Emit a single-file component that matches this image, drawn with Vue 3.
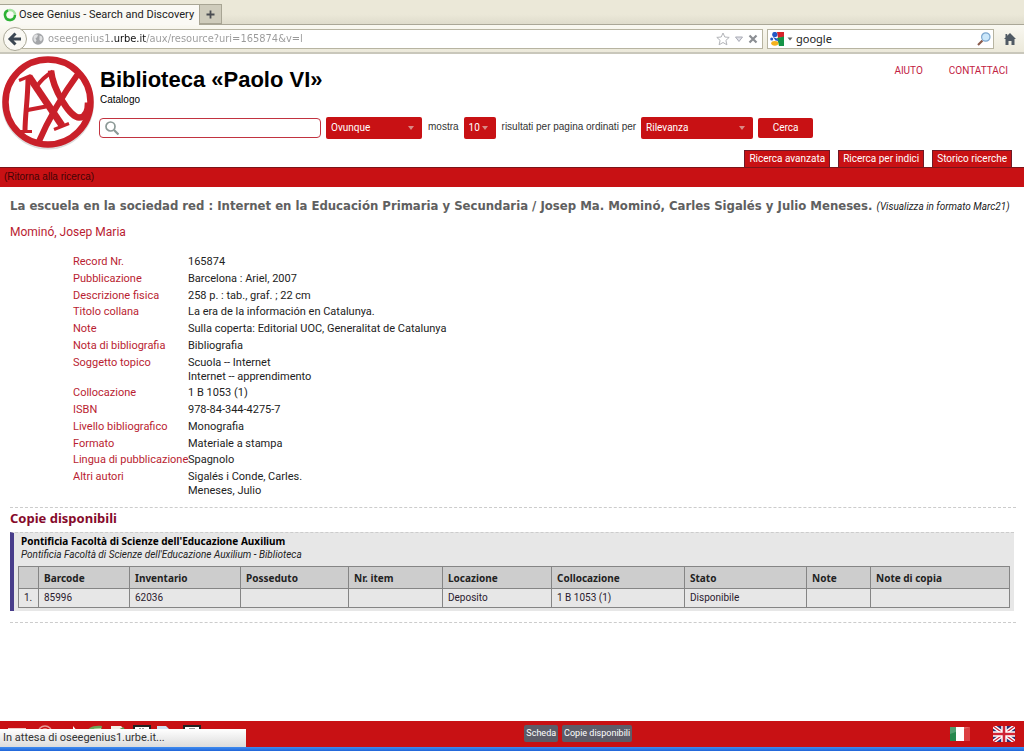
<script setup>
import { ref } from 'vue'

const address = ref('oseegenius1.urbe.it/aux/resource?uri=165874&v=l')
const webSearch = ref('google')
const query = ref('')

const details = [
  { label: 'Record Nr.', values: ['165874'] },
  { label: 'Pubblicazione', values: ['Barcelona : Ariel, 2007'] },
  { label: 'Descrizione fisica', values: ['258 p. : tab., graf. ; 22 cm'] },
  { label: 'Titolo collana', values: ['La era de la información en Catalunya.'] },
  { label: 'Note', values: ['Sulla coperta: Editorial UOC, Generalitat de Catalunya'] },
  { label: 'Nota di bibliografia', values: ['Bibliografia'] },
  { label: 'Soggetto topico', values: ['Scuola -- Internet', 'Internet -- apprendimento'] },
  { label: 'Collocazione', values: ['1 B 1053 (1)'] },
  { label: 'ISBN', values: ['978-84-344-4275-7'] },
  { label: 'Livello bibliografico', values: ['Monografia'] },
  { label: 'Formato', values: ['Materiale a stampa'] },
  { label: 'Lingua di pubblicazione', values: ['Spagnolo'] },
  { label: 'Altri autori', values: ['Sigalés i Conde, Carles.', 'Meneses, Julio'] },
]

const columns = ['', 'Barcode', 'Inventario', 'Posseduto', 'Nr. item', 'Locazione', 'Collocazione', 'Stato', 'Note', 'Note di copia']
const copies = [['1.', '85996', '62036', '', '', 'Deposito', '1 B 1053 (1)', 'Disponibile', '', '']]
</script>

<template>
  <div class="window">
    <div class="tabstrip">
      <div class="tab">
        <svg class="spinner" viewBox="0 0 14 14"><circle cx="7" cy="7" r="5" fill="none" stroke="#a5e3a0" stroke-width="2.4"/><path d="M5 2.4A5 5 0 1 0 12 7" fill="none" stroke="#2eb135" stroke-width="2.4"/></svg>
        <span>Osee Genius - Search and Discovery</span>
      </div>
      <button class="newtab" aria-label="Nuova scheda"><svg viewBox="0 0 9 9"><path d="M4.5 0.5v8M0.5 4.5h8" stroke="#4a4d52" stroke-width="1.8"/></svg></button>
    </div>
    <div class="navbar">
      <button class="back" aria-label="Indietro">
        <svg viewBox="0 0 24 24"><circle cx="12" cy="12" r="11.5" fill="#faf9f4" stroke="#a9a796"/><path d="M12.5 6.5 7 12l5.500 5.500M7.500 12H18" fill="none" stroke="#3c4753" stroke-width="3"/></svg>
      </button>
      <div class="addressbar">
        <svg class="i12" viewBox="0 0 12 12"><circle cx="6" cy="6" r="5.700" fill="#a3a5a8"/><path d="M1.500 3 4 1.200 6 2 5 4.500 3.500 5 4.500 7.500 3.200 9.500 1.500 7zM7.500 2.500 10 3.500 10.500 6 9 8.500 7.500 7z" fill="#dfe0e1"/></svg>
        <input v-model="address" class="url" aria-label="Indirizzo">
        <svg class="i14" viewBox="0 0 14 14"><path d="m7 1 1.800 4 4.400.4-3.300 3 1 4.400L7 10.500l-3.900 2.300 1-4.400-3.300-3 4.400-.4z" fill="#fff" stroke="#b2b4b8"/></svg>
        <svg class="i10" viewBox="0 0 10 10"><path d="M1.500 3h7L5 7.500z" fill="#e0e1e8" stroke="#a9abb5"/></svg>
        <svg class="i10" viewBox="0 0 10 10"><path d="m1.500 1.500 7 7m0-7-7 7" stroke="#8b8e93" stroke-width="2.200"/></svg>
      </div>
      <div class="searchbar">
        <svg class="i14" viewBox="0 0 14 14"><path d="M7 0h7v5L8 6z" fill="#d8232a"/><path d="M7 6 14 4.500V14H9z" fill="#159447"/><path d="M0 0h7v14H0z" fill="#fff"/><circle cx="4.800" cy="2.500" r="2.600" fill="#2458c5"/><circle cx="1.700" cy="7" r="1.500" fill="#2458c5"/><path d="m3 5 4 1.500L9 9 5.500 8.500z" fill="#2458c5"/><ellipse cx="4.800" cy="11.300" rx="3.600" ry="2.400" fill="#f5b21c"/></svg>
        <svg class="caret" viewBox="0 0 6 4"><path d="M0.500 0.500h5L3 3.500z" fill="#666"/></svg>
        <input v-model="webSearch" class="web" aria-label="Ricerca web">
        <svg class="i14" viewBox="0 0 14 14"><path d="M5.500 8.500 1 13" stroke="#8a5b4c" stroke-width="2.200"/><circle cx="8.800" cy="5" r="4.200" fill="#cbe7fa" stroke="#7ca6ce" stroke-width="1.200"/></svg>
      </div>
      <button class="home" aria-label="Pagina iniziale"><svg class="i12" viewBox="0 0 12 12"><path d="M6 0 12 6H10.500V12H7.500V8H4.500V12H1.500V6H0L1.500 4.500V1H3.200V2.800z" fill="#505a64"/></svg></button>
    </div>

    <header>
      <svg class="logo" viewBox="0 0 92 92">
        <circle cx="46" cy="47" r="42.500" fill="none" stroke="#ddd" stroke-width="7"/>
        <circle cx="46" cy="45.500" r="42.500" fill="#fff" stroke="#c9202a" stroke-width="6.500"/>
        <g fill="none" stroke="#c9202a">
          <path d="M17 24 29 19" stroke-width="3"/>
          <path d="M26 21C26 42 23 58 23 75" stroke-width="5"/>
          <path d="M15 75 30 75" stroke-width="3"/>
          <path d="M27 20 60 69" stroke-width="7"/>
          <path d="M23 54 44 50" stroke-width="4"/>
          <path d="M34 31C38 25 42 20 51 15" stroke-width="4"/>
          <path d="M49 14C51 33 68 61 77 61C83 61 86 55 86 46" stroke-width="6.500"/>
          <path d="M77 16C66 31 48 59 36 87" stroke-width="6"/>
          <path d="M52 73 67 67" stroke-width="3"/>
        </g>
      </svg>
      <div class="head">
        <div class="headtop">
          <div class="brand"><h1>Biblioteca «Paolo VI»</h1><p>Catalogo</p></div>
          <nav class="links"><a href="#">AIUTO</a><a href="#">CONTATTACI</a></nav>
        </div>
        <form class="find" @submit.prevent>
          <div class="query">
            <svg class="i14" viewBox="0 0 14 14"><circle cx="5.500" cy="5.500" r="4.500" fill="none" stroke="#8b9996" stroke-width="1.700"/><path d="m9 9 4.500 4.500" stroke="#8b9996" stroke-width="2.200"/></svg>
            <input v-model="query" aria-label="Testo da cercare">
          </div>
          <div class="pick where"><select aria-label="Campo di ricerca"><option>Ovunque</option></select><svg class="caret" viewBox="0 0 6 4"><path d="M0 0h6L3 4z" fill="#d98a86"/></svg></div>
          <label for="rows">mostra</label>
          <div class="pick count"><select id="rows"><option>10</option></select><svg class="caret" viewBox="0 0 6 4"><path d="M0 0h6L3 4z" fill="#d98a86"/></svg></div>
          <label for="order">risultati per pagina ordinati per</label>
          <div class="pick order"><select id="order"><option>Rilevanza</option></select><svg class="caret" viewBox="0 0 6 4"><path d="M0 0h6L3 4z" fill="#d98a86"/></svg></div>
          <button class="go">Cerca</button>
        </form>
        <nav class="modes"><a href="#">Ricerca avanzata</a><a href="#">Ricerca per indici</a><a href="#">Storico ricerche</a></nav>
      </div>
    </header>
    <div class="crumbs"><a href="#">(Ritorna alla ricerca)</a></div>

    <main>
      <div class="title"><h2>La escuela en la sociedad red : Internet en la Educación Primaria y Secundaria / Josep Ma. Mominó, Carles Sigalés y Julio Meneses.</h2><a href="#">(Visualizza in formato Marc21)</a></div>
      <a class="author" href="#">Mominó, Josep Maria</a>
      <dl>
        <template v-for="d in details" :key="d.label">
          <dt>{{ d.label }}</dt>
          <dd><div v-for="v in d.values" :key="v">{{ v }}</div></dd>
        </template>
      </dl>
      <section>
        <h3>Copie disponibili</h3>
        <div class="library">
          <h4>Pontificia Facoltà di Scienze dell'Educazione Auxilium</h4>
          <p>Pontificia Facoltà di Scienze dell'Educazione Auxilium - Biblioteca</p>
          <table>
            <colgroup><col v-for="(c, i) in columns" :key="i" :class="'c' + i"></colgroup>
            <thead><tr><th v-for="(c, i) in columns" :key="i" scope="col">{{ c }}</th></tr></thead>
            <tbody><tr v-for="row in copies" :key="row[1]"><td v-for="(c, i) in row" :key="i">{{ c }}</td></tr></tbody>
          </table>
        </div>
      </section>
    </main>

    <footer>
      <svg class="tools" viewBox="0 0 204 22">
        <path d="M8 7h18v10H8z" fill="#f3c9c4"/><path d="M38 12a7 7 0 0 1 14 0M41 12a4 4 0 0 1 8 0" fill="none" stroke="#e99a96" stroke-width="1.500"/>
        <path d="m73 5 5 6v6h-5z" fill="#fff"/><path d="M86 14c1-7 6-10 16-9l-2 12H86z" fill="#6aa55a"/><path d="M90 12c3-4 6-4 11-4" stroke="#b9d8a4" stroke-width="2"/>
        <path d="M111 5h10l4 4v10h-14z" fill="#f1efe6"/><path d="m118 10 6-3" stroke="#5b9b4d" stroke-width="2"/>
        <path d="M134 5h16v14h-16z" fill="#fff" stroke="#222" stroke-width="2"/><path d="M140 7v2m3-2v2" stroke="#333"/>
        <path d="M157 5h9l4 4v10h-13z" fill="#cfe0f2"/>
        <path d="M184 5h16v14h-16z" fill="#fff" stroke="#222" stroke-width="2"/><path d="M189 8h2m1-1v2m2-2v2" stroke="#333"/>
      </svg>
      <div class="jump"><button>Scheda</button><button>Copie disponibili</button></div>
      <div class="flags">
        <button aria-label="Italiano"><svg viewBox="0 0 22 16"><path d="M1 1h6v14H1z" fill="#26884e"/><path d="M7 1h8v14H7z" fill="#fff"/><path d="M15 1h6v14h-6z" fill="#dc3e42"/><path d="M1 1h20L1 8z" fill="#fff" opacity=".2"/></svg></button>
        <button aria-label="English"><svg viewBox="0 0 22 16"><path d="M0 0h22v16H0z" fill="#2b2f72"/><path d="M0 0 22 16M22 0 0 16" stroke="#fff" stroke-width="4"/><path d="M0 0 22 16M22 0 0 16" stroke="#cf2436" stroke-width="1.300"/><path d="M11 0v16M0 8h22" stroke="#fff" stroke-width="5.500"/><path d="M11 0v16M0 8h22" stroke="#cf2436" stroke-width="2.600"/></svg></button>
      </div>
      <div class="status">In attesa di oseegenius1.urbe.it...</div>
    </footer>
    <div class="taskbar"></div>
  </div>
</template>

<style>
body { margin: 0; background: #fff; }
</style>

<style scoped>
* { box-sizing: border-box; }
.window { min-height: 100vh; display: flex; flex-direction: column; font: 11px/14px Roboto, "Noto Sans", sans-serif; color: #222; }
h1, h2, h3, h4, p, dl, dd { margin: 0; }
a { text-decoration: none; }
button, input, select { font: inherit; border: 0; padding: 0; margin: 0; background: none; outline: 0; }
svg { display: block; flex: none; }
.i10 { width: 10px; height: 10px; }
.i12 { width: 12px; height: 12px; }
.i14 { width: 14px; height: 14px; }
.caret { width: 6px; height: 4px; }

.tabstrip { display: flex; align-items: flex-end; height: 25px; background: linear-gradient(#ebe8d8 60%, #dfdccc); border-bottom: 1px solid #aaa797; }
.tab { display: flex; align-items: center; gap: 2px; width: 200px; height: 21px; padding-left: 3px; margin-bottom: -1px; background: #faf9f4; border: 1px solid #a8a594; border-left: 0; border-bottom: 0; white-space: nowrap; color: #222; }
.spinner { width: 14px; height: 14px; }
.newtab { width: 22px; height: 20px; display: grid; place-items: center; background: #cfccbc; border: 1px solid #a8a594; border-left: 0; }
.newtab svg { width: 9px; height: 9px; }
.navbar { display: flex; align-items: center; height: 29px; padding: 0 8px 0 3px; background: linear-gradient(#f9f8f1, #ece9da); border-bottom: 2px solid #c9c7bb; }
.back { z-index: 1; width: 24px; height: 24px; }
.back svg { width: 24px; height: 24px; }
.addressbar, .searchbar { display: flex; align-items: center; height: 20px; background: #fff; border: 1px solid #b7b4a1; }
.addressbar { flex: 1; gap: 4px; margin-left: -8px; padding: 0 4px 0 12px; }
.url { flex: 1; min-width: 0; font-family: "DejaVu Sans Condensed", "DejaVu Sans", sans-serif; color: transparent; background: linear-gradient(90deg, #999 63px, #111 63px 98px, #999 98px); background-clip: text; -webkit-background-clip: text; }
.searchbar { width: 227px; gap: 3px; margin-left: 4px; padding: 0 2px; }
.web { flex: 1; min-width: 0; color: #222; font-family: "Noto Sans", sans-serif; }
.home { margin-left: 10px; }

header { display: flex; padding-left: 2px; height: 113px; }
.logo { width: 92px; height: 95px; margin-top: 1px; }
.head { flex: 1; display: flex; flex-direction: column; padding-left: 5px; }
.headtop { display: flex; justify-content: space-between; height: 63px; padding: 11px 16px 0 1px; font-family: "Liberation Sans", Arial, sans-serif; }
h1 { font: bold 22px/30px "Liberation Sans", Arial, sans-serif; color: #000; }
.brand p { font-size: 10px; line-height: 10px; color: #000; }
.links { display: flex; gap: 26px; font: 10px/12px Roboto, sans-serif; }
.links a { color: #c2213f; }
.find { display: flex; align-items: flex-start; height: 33px; white-space: nowrap; }
.find label { font: 10px/19px "Liberation Sans", Arial, sans-serif; color: #333; margin: 0 5px 0 6px; }
.query { display: flex; align-items: center; width: 222px; height: 20px; margin: 1px 5px 0 0; padding-left: 5px; border: 1px solid #c13340; border-radius: 4px; }
.query input { flex: 1; min-width: 0; }
.pick { display: grid; align-items: center; height: 22px; background: #c81114; border-radius: 2px; font-size: 10px; color: #fff; }
.pick > * { grid-area: 1 / 1; }
.pick select { width: 100%; height: 22px; padding-left: 5px; appearance: none; color: #fff; }
.pick .caret { justify-self: end; margin-right: 8px; pointer-events: none; }
.where { width: 96px; }
.count { width: 32px; }
.order { width: 112px; margin-right: 5px; }
.go { width: 55px; height: 20px; margin-top: 1px; background: #c81114; border-radius: 2px; color: #fff; font-size: 10px; }
.modes { display: flex; justify-content: flex-end; gap: 8px; height: 17px; padding-right: 12px; font-size: 10px; line-height: 16px; }
.modes a { padding: 0 4px; color: #fff; background: #c81114; border: 1px solid #6e1a28; border-bottom: 0; white-space: nowrap; }
.crumbs { height: 20px; padding-left: 4px; background: #c81114; border-top: 1px solid #7b151a; font: 10px/18px "Liberation Sans", Arial, sans-serif; }
.crumbs a { color: #420404; }

main { flex: 1; padding: 10px 8px 0 10px; }
.title { display: flex; align-items: baseline; gap: 4px; white-space: nowrap; line-height: 18px; }
h2 { font: bold 13px/18px "DejaVu Sans Condensed", "DejaVu Sans", sans-serif; color: #606060; }
.title a { font-size: 10px; font-style: italic; color: #222; }
.author { display: block; margin-top: 9px; font-size: 12px; color: #b91d31; }
dl { display: grid; grid-template-columns: 111px 1fr; column-gap: 4px; align-content: space-between; min-height: 243px; margin: 16px 0 9px 63px; }
dt { color: #b91d31; white-space: nowrap; }
section { border-top: 1px dashed #ccc; border-bottom: 1px dashed #ccc; padding-bottom: 11px; }
h3 { font: bold 13px/18px "Noto Sans", sans-serif; padding: 1px 0 5px; color: #860a2b; }
.library { margin-right: 2px; padding: 1px 4px 3px; border-left: 4px solid #483d8b; border-top: 1px dashed #ccc; background: #e7e7e7; }
.library h4, .library p { padding-left: 3px; font-size: 10px; }
.library h4 { color: #000; font-family: "Noto Sans", sans-serif; }
.library p { font-style: italic; }
table { width: 100%; margin-top: 4px; table-layout: fixed; border-collapse: collapse; font-size: 10px; line-height: 14px; }
th, td { border: 1px solid #858585; text-align: left; padding: 2px 5px; height: 19px; white-space: nowrap; color: #2a1a2e; }
th { height: 22px; background: #cdcdcd; color: #222; font-family: "Noto Sans", sans-serif; }
.c0 { width: 20px; } .c1 { width: 91px; } .c2 { width: 111px; } .c3 { width: 108px; } .c4 { width: 94px; } .c5 { width: 109px; } .c6 { width: 133px; } .c7 { width: 122px; } .c8 { width: 64px; }

footer { position: relative; display: grid; grid-template-columns: 4fr auto 3fr; align-items: start; height: 26px; background: #c81114; }
.tools { width: 204px; height: 22px; }
.jump { display: flex; gap: 4px; padding: 4px 0 0 2px; }
.jump button { height: 17px; padding: 0 2px; background: #5d5c68; border-radius: 2px; color: #fff; font: 9px/17px Roboto, sans-serif; }
.flags { display: flex; justify-content: flex-end; gap: 22px; padding: 5px 9px 0 0; }
.flags svg { width: 22px; height: 16px; }
.status { position: absolute; left: 0; bottom: 0; width: 246px; height: 18px; padding-left: 3px; line-height: 18px; background: linear-gradient(#fff, #dcdcdc); color: #333; }
.taskbar { height: 4px; background: linear-gradient(#3f8cf0, #2065d8); }
</style>
